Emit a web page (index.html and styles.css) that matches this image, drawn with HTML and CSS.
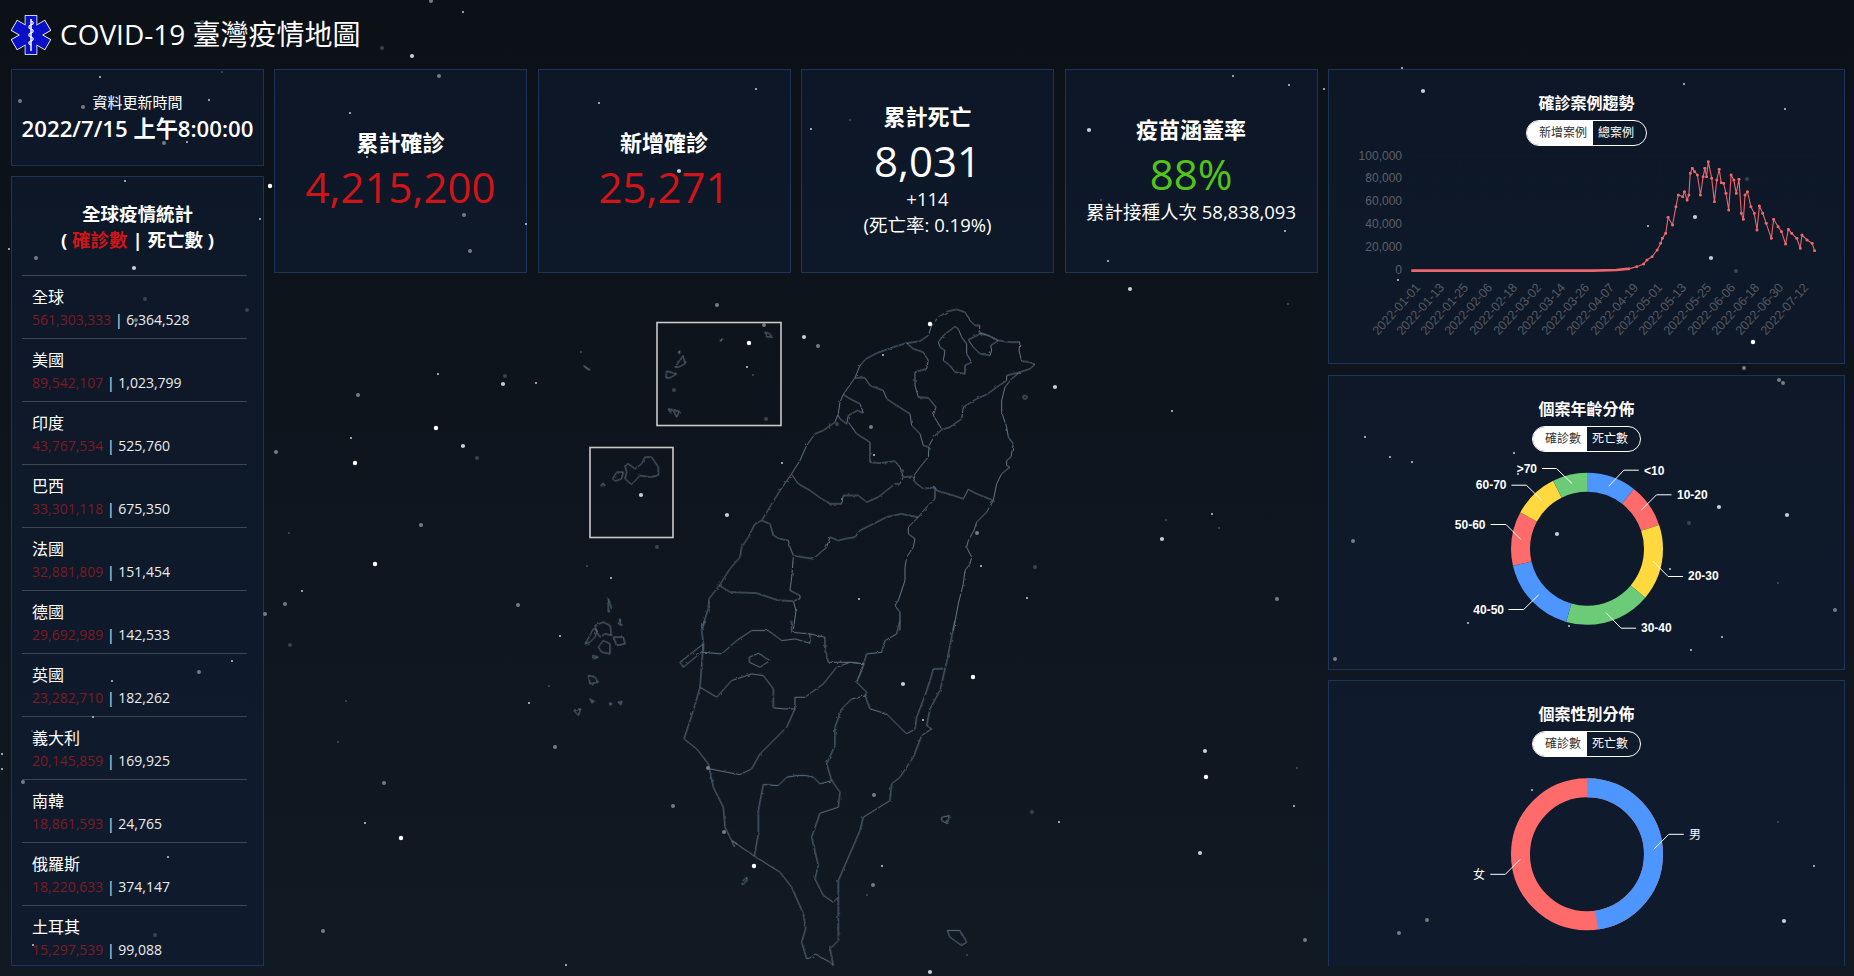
FILE: index.html
```html
<!DOCTYPE html>
<html lang="zh-Hant">
<head>
    <meta charset="UTF-8">
    <meta name="viewport" content="width=device-width, initial-scale=1.0">
    <title>COVID-19 臺灣疫情地圖</title>
    <link rel="stylesheet" href="styles.css">
</head>
<body>

    <header class="page-header">
        <svg class="logo" viewBox="-20 -20 40 40" width="40" height="40">
            <g class="logo-edge">
                <rect x="-5.5" y="-19" width="11" height="38"/>
                <rect x="-5.5" y="-19" width="11" height="38" transform="rotate(60)"/>
                <rect x="-5.5" y="-19" width="11" height="38" transform="rotate(120)"/>
            </g>
            <g class="logo-fill">
                <rect x="-5.5" y="-19" width="11" height="38"/>
                <rect x="-5.5" y="-19" width="11" height="38" transform="rotate(60)"/>
                <rect x="-5.5" y="-19" width="11" height="38" transform="rotate(120)"/>
            </g>
            <path class="logo-rod" d="M0 -16V16"/>
            <path class="logo-snake" d="M0 -14c3 1 3 3 0 4s-3 3 0 4 3 3 0 4-3 3 0 4 3 3 0 4-3 3 0 4"/>
        </svg>
        <h1>COVID-19 臺灣疫情地圖</h1>
    </header>

    <main class="dashboard">
        <section class="side-col">
            <div class="card time-card">
                <p class="time-label">資料更新時間</p>
                <p class="time-value">2022/7/15 上午8:00:00</p>
            </div>
            <div class="card world-card">
                <h2>全球疫情統計<br>( <span class="red">確診數</span> | 死亡數 )</h2>
                <ul class="world-list">
                    <li><span class="name">全球</span><span class="nums"><span class="cases">561,303,333</span> | 6,364,528</span></li>
                    <li><span class="name">美國</span><span class="nums"><span class="cases">89,542,107</span> | 1,023,799</span></li>
                    <li><span class="name">印度</span><span class="nums"><span class="cases">43,767,534</span> | 525,760</span></li>
                    <li><span class="name">巴西</span><span class="nums"><span class="cases">33,301,118</span> | 675,350</span></li>
                    <li><span class="name">法國</span><span class="nums"><span class="cases">32,881,809</span> | 151,454</span></li>
                    <li><span class="name">德國</span><span class="nums"><span class="cases">29,692,989</span> | 142,533</span></li>
                    <li><span class="name">英國</span><span class="nums"><span class="cases">23,282,710</span> | 182,262</span></li>
                    <li><span class="name">義大利</span><span class="nums"><span class="cases">20,145,859</span> | 169,925</span></li>
                    <li><span class="name">南韓</span><span class="nums"><span class="cases">18,861,593</span> | 24,765</span></li>
                    <li><span class="name">俄羅斯</span><span class="nums"><span class="cases">18,220,633</span> | 374,147</span></li>
                    <li><span class="name">土耳其</span><span class="nums"><span class="cases">15,297,539</span> | 99,088</span></li>
                </ul>
            </div>
        </section>

        <section class="center-col">
            <div class="stats">
                <div class="card stat-card">
                    <h3>累計確診</h3>
                    <p class="stat-value red">4,215,200</p>
                </div>
                <div class="card stat-card">
                    <h3>新增確診</h3>
                    <p class="stat-value red">25,271</p>
                </div>
                <div class="card stat-card">
                    <h3>累計死亡</h3>
                    <p class="stat-value">8,031</p>
                    <p class="stat-sub">+114</p>
                    <p class="stat-sub">(死亡率: 0.19%)</p>
                </div>
                <div class="card stat-card">
                    <h3>疫苗涵蓋率</h3>
                    <p class="stat-value green">88%</p>
                    <p class="stat-sub">累計接種人次 58,838,093</p>
                </div>
            </div>

            <!-- viewBox uses page coordinates, the groups are traced at 3x -->
            <svg class="map" viewBox="274 283.5 1044 682.5">
                <defs>
                    <filter id="rough" x="-5%" y="-5%" width="110%" height="110%">
                        <feTurbulence type="fractalNoise" baseFrequency="0.25" numOctaves="1" seed="4"/>
                        <feDisplacementMap in="SourceGraphic" scale="2.8"/>
                    </filter>
                </defs>
                <rect class="map-box" x="657" y="322" width="124" height="103"/>
                <rect class="map-box" x="590" y="447" width="83" height="90"/>
                <g class="map-lines" filter="url(#rough)">
                    <!-- north -->
                    <g transform="translate(780 290) scale(.3333)">
                        <polyline points="0,600 35,550 60,510 80,465 105,430 130,420 165,395 175,370 180,335 190,312 205,290 225,262 240,225 258,205 290,188 340,170 380,158 420,152 445,135 455,105 475,80 505,62 530,57 555,65 570,90 585,105 600,105 597,125 625,135 655,150 690,155 720,155 717,180 725,212 750,215 765,222 750,235 720,245 695,265 675,290 665,330 665,365 680,410 685,440 700,460 693,500 680,510 680,525 690,530 665,550 650,580 640,630 620,665 590,695 582,720 565,750 560,770 575,800 570,820 555,840 550,880 535,940 520,1020"/>
                        <polygon points="525,108 510,120 490,135 475,155 480,170 495,180 490,210 510,225 525,245 555,250 555,225 575,215 560,190 560,160 545,140 535,115"/>
                        <polygon points="565,148 600,130 625,135 655,150 632,165 635,180 630,195 600,190 580,170"/>
                        <polyline points="380,158 400,175 430,185 445,210 440,235 405,245 405,285 415,320 445,322 468,350 460,375 485,415"/>
                        <polyline points="720,245 680,255 680,270 650,290 620,312 590,325 550,350 545,385 510,410 485,418 465,435 447,465"/>
                        <polyline points="225,262 255,262 270,285 310,300 320,325 350,345 390,370 395,405 420,430 430,465 447,470 445,500 420,530 400,558 370,560"/>
                        <polyline points="190,312 210,325 240,340 250,368 232,360 205,375 200,400 180,385 175,375"/>
                        <polyline points="205,395 230,430 270,455 270,485 270,515 300,518 345,512 360,530 370,560 360,580 345,580 320,600 295,620 260,635 235,615 190,615 185,640 150,640 125,625 90,600 55,580 35,552"/>
                        <polyline points="400,558 405,575 430,595 465,590 470,600 510,612 550,625 565,597 590,610 640,630"/>
                        <polyline points="465,590 465,625 435,655 415,680 385,710 385,730 405,745 400,770 380,800 375,830 375,870 355,930 345,945 360,965 360,1020"/>
                        <polyline points="415,680 385,675 365,670 320,680 280,700 240,720 225,740 195,745 175,750 150,740 140,770 100,805 65,800 40,795 30,770 25,750 0,745"/>
                        <polyline points="40,800 35,860 30,900 60,915 60,925 40,932 0,930"/>
                        <polyline points="40,932 48,960 40,1020"/>
                        <ellipse cx="735" cy="320" rx="7" ry="5"/>
                    </g>
                    <!-- south -->
                    <g transform="translate(660 620) scale(.3333)">
                        <polyline points="135,0 125,30 130,70 120,200 100,270 72,355 110,385 145,430 160,500 190,560 195,620 215,660 285,708 360,755 395,800 430,880 437,925 425,965 440,1015 455,1010 465,1000 510,1025 520,1035 510,985 535,960 535,830 535,780 600,630 610,590 690,540 695,490 720,470 760,410 785,345 815,325 800,315 810,265 840,210 860,125 885,0"/>
                        <polyline points="850,145 820,145 810,180 795,225 770,290 765,325 740,340 710,310 680,280 630,265 615,225 620,215 590,185 605,150 620,100 665,95 675,60 710,40 720,0"/>
                        <polyline points="535,830 520,845 490,825 465,775 475,735 455,650 480,578 535,560 540,515 515,480 500,430 525,375 525,320 545,265 575,235 620,225"/>
                        <polyline points="612,130 570,125 530,140 490,190 435,230 405,230 405,265 375,265 340,262 340,205 310,165 275,160 215,180 170,230 120,200"/>
                        <polyline points="405,265 380,320 300,400 275,445 240,462 200,455 150,445"/>
                        <polyline points="515,480 480,490 460,470 440,465 410,465 380,470 355,495 310,492 295,570 295,640 283,708"/>
                        <polyline points="130,95 185,100 230,60 275,30 325,30 365,60 405,55 450,68 450,40 495,50 495,90 505,125 570,125 612,130 590,185"/>
                        <polyline points="395,0 395,35 450,40"/>
                        <polygon points="60,125 130,70 130,90 70,140"/>
                        <polygon points="268,110 295,98 330,120 300,140 268,125"/>
                        <polygon points="245,785 260,770 262,780 248,793"/>
                        <polygon points="845,590 868,585 862,610 845,600"/>
                        <polygon points="862,930 900,930 920,965 905,975 870,950"/>
                        <polygon points="215,660 232,670 222,678"/>
                    </g>
                    <!-- west coast and the outlying islands -->
                    <g transform="translate(560 300) scale(.3333)">
                        <polyline points="660,570 605,660 585,670 565,710 545,740 540,770 510,805 478,855 447,895 445,925 425,985"/>
                        <polyline points="605,660 630,670 640,705 660,715"/>
                        <polyline points="660,900 640,895 590,878 510,875 478,855"/>
                        <polygon points="345,200 370,165 375,190 355,200"/>
                        <polygon points="318,232 320,212 350,220 330,232"/>
                        <polygon points="325,325 338,328 330,335"/>
                        <polygon points="340,330 358,332 350,350"/>
                        <polygon points="615,95 630,100 635,108 620,110"/>
                        <polygon points="480,120 488,115 484,122"/>
                        <polygon points="354,152 360,152 358,160"/>
                        <polygon points="195,495 205,490 225,505 245,490 255,470 275,470 295,500 295,525 270,530 240,525 215,552 195,535 200,515"/>
                        <polygon points="158,535 170,515 190,515 185,535 165,542"/>
                        <polygon points="122,555 130,548 135,555"/>
                        <polygon points="70,195 90,208 80,205"/>
                        <polygon points="145,895 155,925 145,935"/>
                        <polygon points="75,1030 90,1005 100,985 112,990 105,1010 90,1025"/>
                        <polygon points="105,975 130,965 150,975 155,1005 135,1000 120,1010 110,995"/>
                        <polygon points="115,1040 130,1020 150,1030 150,1060 125,1055"/>
                        <polygon points="160,1010 190,1010 195,1030 170,1035"/>
                        <polygon points="180,955 185,975 175,970"/>
                        <polygon points="98,1065 115,1070 100,1075"/>
                        <polygon points="85,1125 105,1130 115,1145 90,1150"/>
                        <polygon points="42,1230 62,1225 55,1245"/>
                        <polygon points="92,1198 102,1202 96,1208"/>
                        <polygon points="148,1208 156,1210 150,1214"/>
                        <polygon points="174,1205 186,1203 182,1213"/>
                    </g>
                </g>
            </svg>
        </section>

        <section class="chart-col">
            <div class="card chart-card">
                <h2>確診案例趨勢</h2>
                <div class="toggle"><span class="on">新增案例</span><span>總案例</span></div>
                <svg class="chart" viewBox="1329 150 515 214">
                    <g class="grid-lines">
                        <path d="M1410 156H1816M1410 179H1816M1410 202H1816M1410 225H1816M1410 248H1816M1410 271H1816"/>
                        <path d="M1410 156V271M1435 156V271M1460 156V271M1485 156V271M1510 156V271M1535 156V271M1560 156V271M1585 156V271M1610 156V271M1635 156V271M1660 156V271M1685 156V271M1710 156V271M1735 156V271M1760 156V271M1785 156V271M1810 156V271"/>
                    </g>
                    <g class="axis-y">
                        <text x="1402" y="160">100,000</text>
                        <text x="1402" y="182">80,000</text>
                        <text x="1402" y="205">60,000</text>
                        <text x="1402" y="228">40,000</text>
                        <text x="1402" y="251">20,000</text>
                        <text x="1402" y="274">0</text>
                    </g>
                    <g class="axis-x">
                        <text transform="translate(1421 288) rotate(-48)">2022-01-01</text>
                        <text transform="translate(1445 288) rotate(-48)">2022-01-13</text>
                        <text transform="translate(1469 288) rotate(-48)">2022-01-25</text>
                        <text transform="translate(1493 288) rotate(-48)">2022-02-06</text>
                        <text transform="translate(1518 288) rotate(-48)">2022-02-18</text>
                        <text transform="translate(1542 288) rotate(-48)">2022-03-02</text>
                        <text transform="translate(1566 288) rotate(-48)">2022-03-14</text>
                        <text transform="translate(1590 288) rotate(-48)">2022-03-26</text>
                        <text transform="translate(1615 288) rotate(-48)">2022-04-07</text>
                        <text transform="translate(1639 288) rotate(-48)">2022-04-19</text>
                        <text transform="translate(1663 288) rotate(-48)">2022-05-01</text>
                        <text transform="translate(1687 288) rotate(-48)">2022-05-13</text>
                        <text transform="translate(1712 288) rotate(-48)">2022-05-25</text>
                        <text transform="translate(1736 288) rotate(-48)">2022-06-06</text>
                        <text transform="translate(1760 288) rotate(-48)">2022-06-18</text>
                        <text transform="translate(1784 288) rotate(-48)">2022-06-30</text>
                        <text transform="translate(1809 288) rotate(-48)">2022-07-12</text>
                    </g>
                    <defs>
                        <marker id="dot" viewBox="-5 -5 10 10" markerWidth="10" markerHeight="10" markerUnits="userSpaceOnUse">
                            <circle class="trend-dot" r="4.5"/>
                        </marker>
                    </defs>
                    <g transform="translate(1320 60) scale(.3406 .3333)">
                        <polyline class="trend-flat" points="268,632 800,632 870,630 910,626"/>
                        <polyline class="trend-line" marker-mid="url(#dot)" marker-end="url(#dot)" points="910,626 930,620 950,612 960,600 975,590 990,570 1000,550 1005,535 1015,520 1022,472 1035,495 1045,440 1052,405 1065,410 1070,395 1078,420 1083,405 1087,340 1093,325 1100,335 1108,345 1117,405 1125,350 1130,325 1135,350 1140,305 1150,355 1158,425 1165,360 1172,328 1178,368 1185,370 1192,400 1200,450 1207,345 1215,360 1222,400 1230,358 1237,460 1243,478 1248,405 1255,395 1265,440 1275,460 1283,510 1290,438 1300,460 1310,490 1325,535 1332,478 1345,500 1355,515 1367,552 1375,508 1385,520 1400,535 1410,565 1415,525 1430,540 1445,550 1452,572"/>
                    </g>
                </svg>
            </div>

            <div class="card chart-card">
                <h2>個案年齡分佈</h2>
                <div class="toggle"><span class="on">確診數</span><span>死亡數</span></div>
                <svg class="chart" viewBox="1329 456.5 515 214">
                    <g class="donut" transform="rotate(-90 1587 549.3)">
                        <circle class="blue" cx="1587" cy="549.3" r="66.5" pathLength="360" stroke-dasharray="38 322"/>
                        <circle class="coral" cx="1587" cy="549.3" r="66.5" pathLength="360" stroke-dasharray="33.6 326.4" stroke-dashoffset="-38"/>
                        <circle class="yellow" cx="1587" cy="549.3" r="66.5" pathLength="360" stroke-dasharray="58.4 301.6" stroke-dashoffset="-71.6"/>
                        <circle class="leaf" cx="1587" cy="549.3" r="66.5" pathLength="360" stroke-dasharray="66 294" stroke-dashoffset="-130"/>
                        <circle class="blue" cx="1587" cy="549.3" r="66.5" pathLength="360" stroke-dasharray="61 299" stroke-dashoffset="-196"/>
                        <circle class="coral" cx="1587" cy="549.3" r="66.5" pathLength="360" stroke-dasharray="41.6 318.4" stroke-dashoffset="-257"/>
                        <circle class="yellow" cx="1587" cy="549.3" r="66.5" pathLength="360" stroke-dasharray="34.9 325.1" stroke-dashoffset="-298.6"/>
                        <circle class="leaf" cx="1587" cy="549.3" r="66.5" pathLength="360" stroke-dasharray="26.5 333.5" stroke-dashoffset="-333.5"/>
                    </g>
                    <g class="leaders">
                        <polyline points="1608.8,486.7 1623.8,470.7 1638.8,470.7"/>
                        <polyline points="1641.2,510.7 1656.5,495.3 1671.5,495.3"/>
                        <polyline points="1653.1,561.7 1668.1,577 1683.1,577"/>
                        <polyline points="1606.1,613.3 1621.1,628.7 1636.1,628.7"/>
                        <polyline points="1538.7,595.3 1523.7,610 1508.4,610"/>
                        <polyline points="1521,540 1506,525 1490.6,525"/>
                        <polyline points="1542,501 1526.4,485.7 1511.4,485.7"/>
                        <polyline points="1572,484 1556.4,469 1542,469"/>
                    </g>
                    <g class="donut-labels">
                        <text x="1644" y="475">&lt;10</text>
                        <text x="1677" y="499.5">10-20</text>
                        <text x="1688" y="580.5">20-30</text>
                        <text x="1641" y="632.5">30-40</text>
                        <text class="left" x="1504" y="614">40-50</text>
                        <text class="left" x="1485.5" y="529">50-60</text>
                        <text class="left" x="1506.5" y="489.5">60-70</text>
                        <text class="left" x="1537" y="473">&gt;70</text>
                    </g>
                </svg>
            </div>

            <div class="card chart-card">
                <h2>個案性別分佈</h2>
                <div class="toggle"><span class="on">確診數</span><span>死亡數</span></div>
                <svg class="chart" viewBox="1329 762 515 214">
                    <g class="donut" transform="rotate(-90 1587 855.3)">
                        <circle class="coral" cx="1587" cy="855.3" r="66.5"/>
                        <circle class="blue" cx="1587" cy="855.3" r="66.5" pathLength="360" stroke-dasharray="171.6 188.4"/>
                    </g>
                    <g class="leaders">
                        <polyline points="1653.8,850.3 1668.8,835.3 1683.8,835.3"/>
                        <polyline points="1520.3,860.3 1505.3,875.3 1490.3,875.3"/>
                    </g>
                    <g class="donut-labels cjk">
                        <text x="1689" y="839.5">男</text>
                        <text class="left" x="1485" y="880">女</text>
                    </g>
                </svg>
            </div>
        </section>
    </main>

    <svg class="stars" viewBox="0 0 1854 976" width="1854" height="976">
        <path class="star-big" d="M270 186h0M930 324h0M749 343h0M436 428h0M355 463h0M375 564h0M401 838h0M754 866h0M973 677h0M1206 777h0M1753 342h0"/>
        <path class="star-light" d="M412 56h0M679 171h0M1089 130h0M1423 91h0M1695 217h0M1711 258h0M1719 507h0M1557 534h0M1787 515h0M804 337h0M1055 387h0M903 684h0M641 495h0M727 515h0M503 384h0M463 446h0M1130 289h0M1162 539h0M1205 751h0M1200 853h0M1784 921h0M930 972h0M134 268h0"/>
        <path class="star-grey" d="M431 1h0M439 76h0M20 101h0M83 107h0M164 143h0M464 215h0M470 251h0M36 258h0M136 320h0M1744 368h0M1779 380h0M1783 383h0M1353 541h0M1835 610h0M1335 659h0M1427 920h0M1399 933h0M199 672h0M23 782h0M818 346h0M871 427h0M977 533h0M708 768h0M673 806h0M874 795h0M724 832h0M873 885h0M717 305h0M764 325h0M358 395h0M276 452h0M421 525h0M285 604h0M518 605h0M555 747h0M384 783h0M323 931h0M1277 599h0M1305 940h0M265 614h0"/>
        <path class="star-dim" d="M382 48h0M202 22h0M145 299h0M247 310h0M1736 271h0M1747 179h0M1689 523h0M155 935h0M837 424h0M902 471h0M1035 567h0M674 390h0M766 419h0M657 547h0M505 376h0M477 458h0M290 645h0M1032 812h0"/>
        <path class="star-small" d="M463 12h0M100 77h0M209 100h0M187 142h0M350 113h0M367 157h0M260 219h0M125 181h0M526 224h0M9 249h0M756 89h0M599 103h0M811 129h0M1233 76h0M1289 85h0M1324 89h0M1285 231h0M1108 261h0M1402 68h0M1684 84h0M1785 109h0M1398 280h0M1648 226h0M1365 437h0M1390 457h0M1412 462h0M1514 453h0M1518 474h0M1670 569h0M1468 623h0M1569 626h0M1722 637h0M1691 650h0M1532 790h0M1814 866h0M232 661h0M112 681h0M93 717h0M2 754h0M2 769h0M168 857h0M33 945h0M883 355h0M874 455h0M782 463h0M981 566h0M859 599h0M1027 598h0M923 720h0M882 866h0M747 367h0M611 578h0M438 374h0M536 383h0M351 438h0M302 591h0M560 636h0M529 703h0M365 823h0M566 965h0M1172 411h0M1212 514h0M1294 806h0M1059 822h0"/>
        <path class="star-faint" d="M222 72h0M850 120h0M1101 200h0M1368 175h0M1778 583h0M1778 822h0M32 731h0M867 895h0M967 955h0M581 352h0M753 375h0M587 566h0M289 533h0M549 686h0M346 701h0M338 742h0M1288 304h0M1166 520h0M1219 528h0M1297 768h0"/>
    </svg>

</body>
</html>
```

FILE: styles.css
```css
* {
    box-sizing: border-box;
}

body {
    position: relative;
    width: 1854px;
    height: 976px;
    margin: 0;
    overflow: hidden;
    font-family: "Open Sans", "Noto Sans CJK TC", sans-serif;
    color: #fff;
    background: linear-gradient(#0c1118, #111923);
}

h1, h2, h3, p, ul {
    margin: 0;
    padding: 0;
}

.page-header {
    display: flex;
    align-items: center;
    gap: 9px;
    height: 69px;
    padding-left: 11px;
}

.page-header h1 {
    padding-bottom: 3px;
    font-size: 28px;
    font-weight: 400;
}

.logo-edge rect {
    fill: #fff;
    stroke: #fff;
    stroke-width: 1.6;
}

.logo-fill rect {
    fill: #0a10c8;
}

.logo-rod {
    stroke: #fff;
    stroke-width: 1.5;
}

.logo-snake {
    fill: none;
    stroke: #fff;
    stroke-width: 1.2;
}

.dashboard {
    display: grid;
    grid-template-columns: 253px 1044px 517px;
    gap: 10px;
    height: 897px;
    padding-left: 11px;
    overflow: hidden;
}

.card {
    background: rgba(15, 32, 60, 0.42);
    border: 1px solid #1d3357;
}

.side-col {
    display: flex;
    flex-direction: column;
    gap: 10px;
    height: 897px;
}

.red {
    color: #cf1518;
}

.green {
    color: #52c41a;
}

/* update time */
.time-card {
    display: flex;
    flex-direction: column;
    justify-content: center;
    flex: none;
    height: 96.5px;
    text-align: center;
}

.time-label {
    font-size: 15px;
    line-height: 24px;
}

.time-value {
    font-size: 22.2px;
    font-weight: 600;
    line-height: 30px;
}

/* world list */
.world-card {
    flex: 1;
    min-height: 0;
    overflow: hidden;
    padding-top: 24px;
}

.world-card h2 {
    font-size: 18.5px;
    font-weight: 700;
    line-height: 26px;
    text-align: center;
}

.world-list {
    list-style: none;
    margin: 22px 16px 0 10px;
}

.world-list li {
    display: flex;
    flex-direction: column;
    height: 63.1px;
    padding: 9px 0 0 10px;
    border-top: 1px solid #3d4650;
}

.world-list .name {
    font-size: 16px;
    line-height: 24px;
}

.world-list .nums {
    font-size: 14px;
    line-height: 22px;
    color: #ececec;
}

.world-list .cases {
    color: #7d1a23;
}

/* stat cards */
.center-col {
    display: flex;
    flex-direction: column;
    gap: 10.5px;
    height: 897px;
    min-width: 0;
}

.stats {
    display: grid;
    grid-template-columns: repeat(4, 253px);
    gap: 10.5px;
    height: 204px;
}

.stat-card {
    display: flex;
    flex-direction: column;
    justify-content: center;
    align-items: center;
    padding-bottom: 3px;
}

.stat-card h3 {
    margin-bottom: 3.5px;
    font-size: 22px;
    font-weight: 700;
    line-height: 30px;
}

.stat-value {
    margin-bottom: -1px;
    font-size: 42px;
    line-height: 52px;
}

.stat-sub {
    font-size: 18.5px;
    line-height: 26px;
}

/* map */
.map {
    display: block;
    flex: 1;
    width: 100%;
    min-height: 0;
}

.map-box {
    fill: none;
    stroke: #c9c9c9;
    stroke-width: 1.6;
}

.map-lines polyline,
.map-lines polygon,
.map-lines ellipse {
    fill: none;
    stroke: #64788a;
    stroke-width: 1;
    stroke-linejoin: round;
    vector-effect: non-scaling-stroke;
}

/* right column charts */
.chart-col {
    display: flex;
    flex-direction: column;
    gap: 10.5px;
}

.chart-card {
    flex: none;
    height: 295px;
    padding-top: 23px;
    text-align: center;
}

.chart-card h2 {
    font-size: 16px;
    font-weight: 700;
    line-height: 20px;
}

.toggle {
    display: inline-flex;
    height: 26px;
    margin-top: 7px;
    vertical-align: top;
    font-size: 12px;
    line-height: 24px;
    border: 1px solid #fff;
    border-radius: 13px;
    overflow: hidden;
}

.toggle span {
    padding: 0 12px 0 5px;
}

.toggle .on {
    padding: 0 6px 0 12px;
    color: #333;
    background: #fff;
}

.chart {
    display: block;
    width: 515px;
    height: 214px;
    margin-top: 4px;
}

.grid-lines path {
    fill: none;
    stroke: #111b29;
    stroke-width: 1;
}

.axis-y text {
    font-family: "Liberation Sans", sans-serif;
    font-size: 12px;
    fill: #5c6066;
    text-anchor: end;
}

.axis-x text {
    font-family: "Liberation Sans", sans-serif;
    font-size: 12.6px;
    fill: #565a60;
    text-anchor: end;
}

.trend-flat {
    fill: none;
    stroke: #ec666c;
    stroke-width: 2.6;
    vector-effect: non-scaling-stroke;
}

.trend-line {
    fill: none;
    stroke: #ec666c;
    stroke-width: 1.1;
    vector-effect: non-scaling-stroke;
}

.trend-dot {
    fill: #ec666c;
}

.donut circle {
    fill: none;
    stroke-width: 19;
}

.donut .blue {
    stroke: #4d96ff;
}

.donut .coral {
    stroke: #ff6b6b;
}

.donut .yellow {
    stroke: #ffd93d;
}

.donut .leaf {
    stroke: #6bcb77;
}

.leaders polyline {
    fill: none;
    stroke: #fff;
    stroke-width: 1;
}

.donut-labels text {
    font-family: "Liberation Sans", "Noto Sans CJK TC", sans-serif;
    font-size: 12px;
    font-weight: 700;
    fill: #fff;
}

.donut-labels.cjk text {
    font-weight: 400;
}

.donut-labels .left {
    text-anchor: end;
}

/* stars */
.stars {
    position: absolute;
    top: 0;
    left: 0;
    pointer-events: none;
}

.stars path {
    fill: none;
    stroke-linecap: round;
}

.star-big {
    stroke: #fff;
    stroke-width: 4.4;
}

.star-light {
    stroke: #c9ccd1;
    stroke-width: 4.2;
}

.star-grey {
    stroke: #777c83;
    stroke-width: 4;
}

.star-dim {
    stroke: #3d434b;
    stroke-width: 4;
}

.star-small {
    stroke: #dfe1e4;
    stroke-width: 1.8;
}

.star-faint {
    stroke: #4f555c;
    stroke-width: 1.8;
}
```
